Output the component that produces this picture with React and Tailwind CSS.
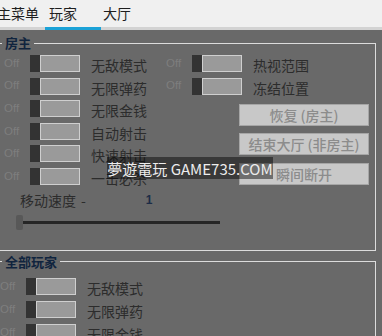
import React from 'react';

const cjk = "font-['Noto_Sans_CJK_SC',sans-serif]";

function Toggle() {
  return (
    <div className="flex h-[17px] w-[50px] shrink-0">
      <div className="w-[10px] bg-[#333333]" />
      <div className="flex-1 border border-[#cfcfcf] bg-[#9a9a9a]" />
    </div>
  );
}

function ToggleRow({ label }) {
  return (
    <div className="flex h-[17px] items-center">
      <span className="w-[26px] shrink-0 font-['Liberation_Sans',sans-serif] text-[11.5px] leading-none text-[#7e7e7e]">
        Off
      </span>
      <Toggle />
      <span className="mt-[3px] ml-[11px] whitespace-nowrap text-[14px] leading-none text-[#2c2c2c]">
        {label}
      </span>
    </div>
  );
}

function GrayButton({ children }) {
  return (
    <div className="flex h-[22px] w-[130px] items-center justify-center border border-[#a6a6a6] bg-[#c8c8c8] text-[14px] font-medium leading-none text-[#8c8c8c]">
      {children}
    </div>
  );
}

export default function App() {
  return (
    <div className={`relative h-[336px] w-[382px] overflow-hidden bg-[#696969] ${cjk}`}>
      {/* tabs */}
      <div className="flex h-[30px] bg-[#f0f0f0] text-[14px] text-[#1e1e1e]">
        <div className="-ml-[3px] flex w-[48px] items-center border-b-[3px] border-[#d3d3d3] whitespace-nowrap">主菜单</div>
        <div className="flex w-[56px] items-center border-b-[3px] border-[#1ba2d7] pl-[4px]">玩家</div>
        <div className="flex w-[56px] items-center border-b-[3px] border-[#d3d3d3] pl-[2px]">大厅</div>
        <div className="flex-1 border-b-[3px] border-[#d3d3d3]" />
      </div>

      {/* 房主 */}
      <fieldset className="-ml-[2px] mr-[6px] mt-[5px] border border-[#dcdcdc] pt-[4px] pb-[20px]">
        <legend className="ml-[3px] px-[3px] text-[13px] font-bold leading-[16px] text-[#10243e]">房主</legend>
        <div className="flex">
          <div className="flex w-[167px] flex-col gap-[5.6px] pl-[5px]">
            <ToggleRow label="无敌模式" />
            <ToggleRow label="无限弹药" />
            <ToggleRow label="无限金钱" />
            <ToggleRow label="自动射击" />
            <ToggleRow label="快速射击" />
            <ToggleRow label="一击必杀" />
          </div>
          <div className="flex flex-col">
            <div className="flex flex-col gap-[5.6px]">
              <ToggleRow label="热视范围" />
              <ToggleRow label="冻结位置" />
            </div>
            <div className="ml-[73px] mt-[9.4px] flex flex-col gap-[7.5px]">
              <GrayButton>恢复 (房主)</GrayButton>
              <GrayButton>结束大厅 (非房主)</GrayButton>
              <GrayButton>瞬间断开</GrayButton>
            </div>
          </div>
        </div>
        <div className="mt-[5px] flex h-[20px] items-center pl-[21px] text-[14px] leading-[20px] text-[#2c2c2c]">
          <span>移动速度</span>
          <span className="ml-[5px]">-</span>
          <span className="ml-[60px] font-['Liberation_Sans',sans-serif] text-[12px] font-bold text-[#1c2c46]">1</span>
        </div>
        <div className="mt-[5px] flex h-[15px] items-center pl-[17px]">
          <div className="h-[15px] w-[7px] rounded-[2px] bg-[#585858]" />
          <div className="h-[3px] w-[197px] bg-[#262626]" />
        </div>
      </fieldset>

      {/* 全部玩家 */}
      <fieldset className="-ml-[2px] mr-[6px] mt-[3px] border border-[#dcdcdc] pt-[8px] pb-[20px]">
        <legend className="ml-[3px] px-[3px] text-[13px] font-bold leading-[16px] text-[#10243e]">全部玩家</legend>
        <div className="flex flex-col gap-[6px] pl-[1px]">
          <ToggleRow label="无敌模式" />
          <ToggleRow label="无限弹药" />
          <ToggleRow label="无限金钱" />
        </div>
      </fieldset>

      {/* watermark */}
      <div className="absolute left-[107px] top-[157px] flex h-[22px] w-[166px] items-center justify-center bg-black/45 text-[15px] leading-none whitespace-nowrap text-[#ececec]">
        夢遊電玩 GAME735.COM
      </div>
    </div>
  );
}
